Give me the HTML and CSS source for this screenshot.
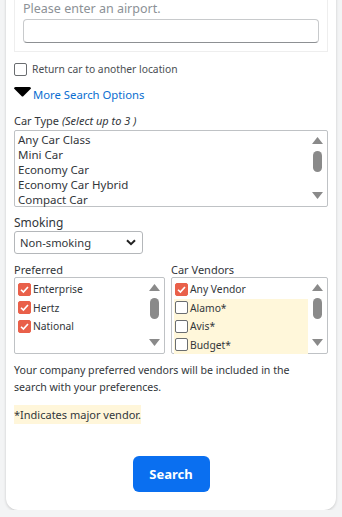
FILE: index.html
```html
<!DOCTYPE html>
<html lang="en">
<head>
  <meta charset="UTF-8" />
  <meta name="viewport" content="width=device-width, initial-scale=1.0" />
  <title>Car Search</title>
  <link rel="stylesheet" href="styles.css">
</head>
<body>
  <div class="card">
    <div class="dropoff">
      <div class="hint">Please enter an airport.</div>
      <input type="text" class="airport" />
    </div>

    <label class="check-row">
      <span class="box"></span>
      <span>Return car to another location</span>
    </label>

    <div class="more">
      <svg class="caret" width="17" height="10" viewBox="0 0 17 10"><path d="M0 1.5 Q0 0 1.5 0 H15.5 Q17 0 17 1.5 L9.5 9 Q8.5 10 7.5 9 Z" fill="#000"/></svg>
      <a href="#">More Search Options</a>
    </div>

    <div class="field-label first">Car Type <i>(Select up to 3 )</i></div>
    <div class="listbox types">
      <div class="items">
        <div>Any Car Class</div>
        <div>Mini Car</div>
        <div>Economy Car</div>
        <div>Economy Car Hybrid</div>
        <div>Compact Car</div>
      </div>
      <div class="scroll">
        <svg width="11" height="7" viewBox="0 0 11 7"><path d="M5.5 0 L11 7 H0 Z" fill="#8a8a8a"/></svg>
        <span class="thumb"></span>
        <svg width="11" height="7" viewBox="0 0 11 7"><path d="M0 0 H11 L5.5 7 Z" fill="#8a8a8a"/></svg>
      </div>
    </div>

    <div class="field-label smoking">Smoking</div>
    <div class="select">
      <span>Non-smoking</span>
      <svg width="10" height="7" viewBox="0 0 10 7"><path d="M1 1.2 L5 5.2 L9 1.2" fill="none" stroke="#222" stroke-width="2"/></svg>
    </div>

    <div class="vendors">
      <div class="col">
        <div class="field-label">Preferred</div>
        <div class="listbox checks">
          <div class="items">
            <div class="opt"><span class="box on"></span>Enterprise</div>
            <div class="opt"><span class="box on"></span>Hertz</div>
            <div class="opt"><span class="box on"></span>National</div>
          </div>
          <div class="scroll">
            <svg width="11" height="7" viewBox="0 0 11 7"><path d="M5.5 0 L11 7 H0 Z" fill="#8a8a8a"/></svg>
            <span class="thumb"></span>
            <svg width="11" height="7" viewBox="0 0 11 7"><path d="M0 0 H11 L5.5 7 Z" fill="#8a8a8a"/></svg>
          </div>
        </div>
      </div>
      <div class="col">
        <div class="field-label">Car Vendors</div>
        <div class="listbox checks">
          <div class="items">
            <div class="opt"><span class="box on"></span>Any Vendor</div>
            <div class="opt major"><span class="box"></span>Alamo*</div>
            <div class="opt major"><span class="box"></span>Avis*</div>
            <div class="opt major"><span class="box"></span>Budget*</div>
          </div>
          <div class="scroll">
            <svg width="11" height="7" viewBox="0 0 11 7"><path d="M5.5 0 L11 7 H0 Z" fill="#8a8a8a"/></svg>
            <span class="thumb"></span>
            <svg width="11" height="7" viewBox="0 0 11 7"><path d="M0 0 H11 L5.5 7 Z" fill="#8a8a8a"/></svg>
          </div>
        </div>
      </div>
    </div>

    <p class="note">Your company preferred vendors will be included in the search with your preferences.</p>
    <p class="foot"><span>*Indicates major vendor.</span></p>

    <div class="actions">
      <button>Search</button>
    </div>
  </div>
</body>
</html>
```

FILE: styles.css
```css
body {
  margin: 0;
  background: #f3f4f5;
  font-family: "Noto Sans", sans-serif;
  font-size: 11px;
  color: #32363a;
}
.card {
  margin: -6px 6px 0;
  height: 516px;
  box-sizing: border-box;
  padding: 0 8px;
  background: #fff;
  border-radius: 0 0 12px 12px;
  box-shadow: 0 1px 3px rgba(0,0,0,0.18);
}
.dropoff {
  border: 1px solid #eeeeee;
  border-top: 0;
  padding: 7px 8px 8px;
}
.hint {
  color: #8c9196;
  font-size: 12.5px;
  line-height: 14px;
  margin-top: 1px;
}
.airport {
  display: block;
  box-sizing: border-box;
  width: 100%;
  height: 24px;
  margin-top: 3px;
  border: 1px solid #c8cacc;
  border-bottom-color: #8d9093;
  border-radius: 4px;
}
.check-row {
  display: flex;
  align-items: center;
  gap: 5px;
  margin-top: 10px;
  color: #4a4e52;
  font-size: 10.3px;
}
.box {
  width: 11px;
  height: 11px;
  border: 1px solid #6a6d70;
  border-radius: 2px;
  background: #fff;
  flex: none;
}
.box.on {
  border-color: #e9604a;
  background: #e9604a url("data:image/svg+xml,%3Csvg xmlns='http://www.w3.org/2000/svg' viewBox='0 0 12 12'%3E%3Cpath d='M2.2 6.3 L4.8 8.8 L9.8 3.2' fill='none' stroke='white' stroke-width='1.8'/%3E%3C/svg%3E") center/11px no-repeat;
}
.more {
  display: flex;
  align-items: center;
  gap: 2px;
  margin-top: 11px;
}
.caret {
  margin-top: -5px;
}
.more a {
  color: #0a6ed1;
  text-decoration: none;
  font-size: 11.3px;
}
.field-label {
  margin-top: 14px;
  line-height: 15px;
}
.field-label.first {
  margin-top: 11px;
}
.field-label.smoking {
  margin-top: 8px;
  font-size: 12px;
}
.field-label i {
  color: #32363a;
}
.listbox {
  display: flex;
  border: 1px solid #bfc2c5;
  border-radius: 2px;
  height: 77px;
  box-sizing: border-box;
}
.types {
  margin-top: 2px;
}
.items {
  flex: 1;
  padding: 1px 3px;
}
.types .items div {
  line-height: 15px;
  font-size: 11.5px;
}
.scroll {
  width: 16px;
  display: flex;
  flex-direction: column;
  align-items: center;
  justify-content: space-between;
  padding: 6px 2px 7px 0;
}
.thumb {
  width: 9px;
  height: 21px;
  border-radius: 5px;
  background: #8a8a8a;
  margin-top: -14px;
}
.select {
  width: 129px;
  height: 23px;
  box-sizing: border-box;
  margin-top: 1px;
  border: 1px solid #b4b7ba;
  border-radius: 3px;
  display: flex;
  align-items: center;
  justify-content: space-between;
  padding: 0 6px 0 5px;
  font-size: 11.2px;
}
.vendors {
  display: grid;
  grid-template-columns: 151px 1fr;
  gap: 6px;
}
.vendors .field-label {
  margin-top: 9px;
  line-height: 14px;
}
.checks .items {
  padding: 2px 1px 0 2px;
  font-size: 10.3px;
}
.opt {
  display: flex;
  align-items: center;
  gap: 2px;
  height: 18.5px;
  padding-left: 1px;
}
.opt.major {
  background: #fff7da;
}
.note {
  margin: 8px 0 0;
  max-width: 296px;
  line-height: 17px;
  font-size: 10.6px;
}
.foot {
  margin: 10px 0 0;
}
.foot span {
  background: #fff6da;
  padding: 2px 0;
  line-height: 17px;
}
.actions {
  display: flex;
  justify-content: center;
  margin-top: 33px;
}
.actions button {
  width: 77px;
  height: 36px;
  border: 0;
  border-radius: 6px;
  background: #0a6ff0;
  color: #fff;
  font-family: "Noto Sans", sans-serif;
  font-weight: bold;
  font-size: 13px;
}
```
